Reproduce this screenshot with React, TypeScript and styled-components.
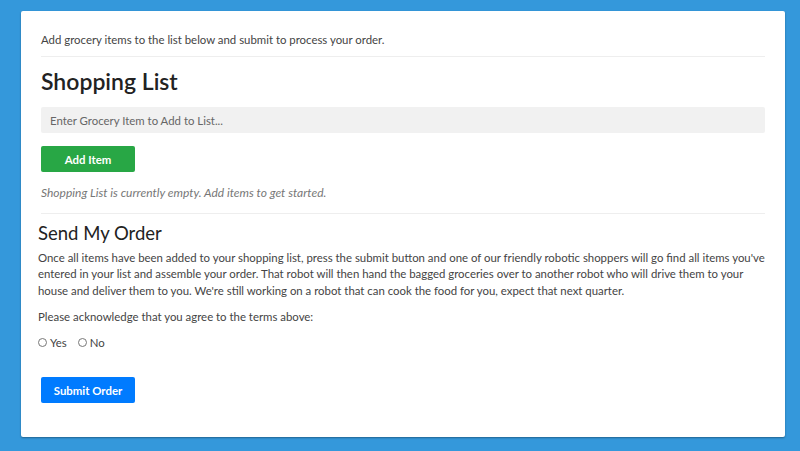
import React from "react";
import styled, { createGlobalStyle } from "styled-components";

const Global = createGlobalStyle`
  html, body { margin: 0; padding: 0; background: #3498db; }
  body { font-family: Lato, "Open Sans", sans-serif; color: #333; }
  * { box-sizing: border-box; }
`;

const Page = styled.div`
  width: 800px;
  height: 451px;
  padding: 11px 15px 0 21px;
  background: #3498db;
`;

const Card = styled.div`
  width: 764px;
  height: 426px;
  background: #fff;
  border-radius: 2px;
  box-shadow: 0 1px 2px rgba(0, 0, 0, 0.35);
  padding: 20px 20px 0 20px;
  display: flex;
  flex-direction: column;
`;

const Intro = styled.p`
  margin: 0;
  font-size: 11.4px;
  line-height: 18px;
  color: #444;
`;

const Rule = styled.hr<{ $top: number; $bottom: number }>`
  border: 0;
  border-top: 1px solid #eee;
  margin: ${(p) => `${p.$top}px 0 ${p.$bottom}px`};
  width: 100%;
`;

const Title = styled.h1`
  margin: 0;
  font-size: 23px;
  font-weight: 600;
  line-height: 28px;
  color: #222;
`;

const Input = styled.input`
  margin-top: 12px;
  height: 26px;
  width: 100%;
  border: 0;
  background: #f1f1f1;
  border-radius: 2px;
  padding: 0 9px;
  font-family: inherit;
  font-size: 11.4px;
  color: #333;
  outline: none;
  &::placeholder { color: #666; }
`;

const Button = styled.button<{ $color: string }>`
  width: 94px;
  height: 26px;
  border: 0;
  border-radius: 2px;
  background: ${(p) => p.$color};
  color: #fff;
  font-family: inherit;
  font-weight: 700;
  font-size: 11.4px;
  cursor: pointer;
`;

const Actions = styled.div<{ $top: number }>`
  margin-top: ${(p) => p.$top}px;
  display: flex;
`;

const Empty = styled.p`
  margin: 13px 0 0;
  font-size: 12px;
  line-height: 16px;
  font-style: italic;
  color: #777;
`;

const OrderSection = styled.div`
  margin-left: -3px;
  display: flex;
  flex-direction: column;
`;

const SubTitle = styled.h2`
  margin: -1px 0 0;
  font-size: 18.5px;
  font-weight: 400;
  line-height: 24px;
  color: #222;
`;

const Para = styled.p<{ $top: number }>`
  margin: ${(p) => p.$top}px 0 0;
  font-size: 11.4px;
  line-height: 16.3px;
  color: #444;
`;

const RadioRow = styled.div`
  margin-top: 11px;
  display: flex;
  align-items: center;
  gap: 11px;
  font-size: 11.4px;
  color: #444;
`;

const RadioLabel = styled.label`
  display: flex;
  align-items: center;
  gap: 3px;
`;

const RadioDot = styled.input`
  margin: 0;
  width: 9px;
  height: 9px;
  appearance: none;
  border: 1px solid #777;
  border-radius: 50%;
  background: #fff;
`;

export default function App() {
  return (
    <>
      <Global />
      <Page>
        <Card>
          <Intro>Add grocery items to the list below and submit to process your order.</Intro>
          <Rule $top={7} $bottom={10} />
          <Title>Shopping List</Title>
          <Input placeholder="Enter Grocery Item to Add to List..." />
          <Actions $top={13}>
            <Button $color="#28a745">Add Item</Button>
          </Actions>
          <Empty>Shopping List is currently empty. Add items to get started.</Empty>
          <Rule $top={12} $bottom={8} />
          <OrderSection>
            <SubTitle>Send My Order</SubTitle>
            <Para $top={5}>
              Once all items have been added to your shopping list, press the submit button and one of our friendly robotic shoppers will go find all items you've entered in your list and assemble your order. That robot will then hand the bagged groceries over to another robot who will drive them to your house and deliver them to you. We're still working on a robot that can cook the food for you, expect that next quarter.
            </Para>
            <Para $top={10}>Please acknowledge that you agree to the terms above:</Para>
            <RadioRow>
              <RadioLabel>
                <RadioDot type="radio" name="agree" />
                Yes
              </RadioLabel>
              <RadioLabel>
                <RadioDot type="radio" name="agree" />
                No
              </RadioLabel>
            </RadioRow>
          </OrderSection>
          <Actions $top={28}>
            <Button $color="#007bff">Submit Order</Button>
          </Actions>
        </Card>
      </Page>
    </>
  );
}
